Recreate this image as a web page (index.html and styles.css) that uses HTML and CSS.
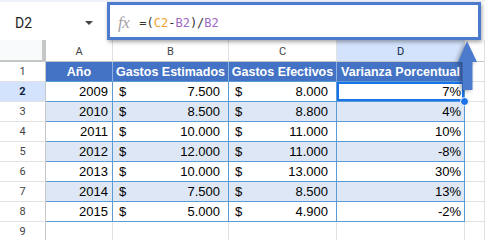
FILE: index.html
```html
<!DOCTYPE html>
<html lang="es">
<head>
    <meta charset="UTF-8">
    <meta name="viewport" content="width=device-width, initial-scale=1.0">
    <title>Varianza Porcentual</title>
    <link rel="stylesheet" href="styles.css">
</head>
<body>
    <div class="sheet">
        <div class="topstrip"></div>
        <div class="bar">
            <div class="namebox"><span>D2</span><span class="caret"></span></div>
            <div class="formula">
                <span class="fx">fx</span>
                <span class="expr">=(<span class="ref-c">C2</span>-<span class="ref-b">B2</span>)/<span class="ref-b">B2</span></span>
            </div>
        </div>
        <div class="grid">
            <div class="row colheads">
                <div class="corner"></div>
                <div class="ch">A</div>
                <div class="ch">B</div>
                <div class="ch">C</div>
                <div class="ch sel">D</div>
                <div class="ch"></div>
            </div>
            <div class="row">
                <div class="rh">1</div>
                <div class="c th">Año</div>
                <div class="c th">Gastos Estimados</div>
                <div class="c th">Gastos Efectivos</div>
                <div class="c th">Varianza Porcentual</div>
                <div class="c blank"></div>
            </div>
            <div class="row">
                <div class="rh sel">2</div>
                <div class="c num">2009</div>
                <div class="c money"><span>$</span><span>7.500</span></div>
                <div class="c money"><span>$</span><span>8.000</span></div>
                <div class="c pct active">7%<span class="handle"></span></div>
                <div class="c blank"></div>
            </div>
            <div class="row alt">
                <div class="rh">3</div>
                <div class="c num">2010</div>
                <div class="c money"><span>$</span><span>8.500</span></div>
                <div class="c money"><span>$</span><span>8.800</span></div>
                <div class="c pct">4%</div>
                <div class="c blank"></div>
            </div>
            <div class="row">
                <div class="rh">4</div>
                <div class="c num">2011</div>
                <div class="c money"><span>$</span><span>10.000</span></div>
                <div class="c money"><span>$</span><span>11.000</span></div>
                <div class="c pct">10%</div>
                <div class="c blank"></div>
            </div>
            <div class="row alt">
                <div class="rh">5</div>
                <div class="c num">2012</div>
                <div class="c money"><span>$</span><span>12.000</span></div>
                <div class="c money"><span>$</span><span>11.000</span></div>
                <div class="c pct">-8%</div>
                <div class="c blank"></div>
            </div>
            <div class="row">
                <div class="rh">6</div>
                <div class="c num">2013</div>
                <div class="c money"><span>$</span><span>10.000</span></div>
                <div class="c money"><span>$</span><span>13.000</span></div>
                <div class="c pct">30%</div>
                <div class="c blank"></div>
            </div>
            <div class="row alt">
                <div class="rh">7</div>
                <div class="c num">2014</div>
                <div class="c money"><span>$</span><span>7.500</span></div>
                <div class="c money"><span>$</span><span>8.500</span></div>
                <div class="c pct">13%</div>
                <div class="c blank"></div>
            </div>
            <div class="row">
                <div class="rh">8</div>
                <div class="c num">2015</div>
                <div class="c money"><span>$</span><span>5.000</span></div>
                <div class="c money"><span>$</span><span>4.900</span></div>
                <div class="c pct">-2%</div>
                <div class="c blank"></div>
            </div>
            <div class="row empty">
                <div class="rh">9</div>
                <div class="c blank"></div>
                <div class="c blank"></div>
                <div class="c blank"></div>
                <div class="c blank"></div>
                <div class="c blank"></div>
            </div>
        </div>
        <svg class="arrow" width="485" height="240" viewBox="0 0 485 240">
            <polygon points="467,41 477,62 472.5,62 472.5,90 462.5,90 462.5,62 458,62" fill="#4c7bce"/>
        </svg>
    </div>
</body>
</html>
```

FILE: styles.css
```css
* {
    box-sizing: border-box;
}
body {
    margin: 0;
    background: #fff;
}
.sheet {
    position: relative;
    width: 485px;
    height: 240px;
    overflow: hidden;
    font-family: "Liberation Sans", Arial, sans-serif;
}
.topstrip {
    height: 2px;
    background: #eef2f8;
}
.bar {
    display: flex;
    height: 38px;
}
.namebox {
    width: 107px;
    display: flex;
    align-items: center;
    justify-content: space-between;
    padding: 3px 14px 0 15px;
    font-family: Roboto, "Liberation Sans", sans-serif;
    font-size: 14px;
    color: #1f1f1f;
}
.caret {
    width: 0;
    height: 0;
    border-left: 4px solid transparent;
    border-right: 4px solid transparent;
    border-top: 4px solid #444;
}
.formula {
    flex: 1;
    margin-right: 4px;
    border: 3px solid #4c7bce;
    box-shadow: 1px 2px 4px rgba(0, 0, 0, 0.35);
    display: flex;
    align-items: center;
    padding: 3px 0 0 8px;
    background: #fff;
    position: relative;
    z-index: 2;
}
.fx {
    font-family: "Liberation Serif", serif;
    font-style: italic;
    font-size: 17px;
    color: #a3a3a3;
    margin-right: 10px;
    letter-spacing: -0.5px;
}
.expr {
    font-family: "DejaVu Sans Mono", monospace;
    font-size: 12px;
    color: #333;
}
.ref-c {
    color: #f29f2f;
}
.ref-b {
    color: #9d69c6;
}
.row {
    display: grid;
    grid-template-columns: 46px 67px 116px 108px 128px 1fr;
    height: 20px;
}
.colheads {
    height: 22px;
}
.corner {
    background: #f8f9fa;
    border-right: 4px solid #c4c7c5;
    border-bottom: 2px solid #c4c7c5;
}
.ch {
    display: flex;
    align-items: center;
    justify-content: center;
    font-family: Roboto, "Liberation Sans", sans-serif;
    font-size: 11px;
    color: #444;
    border-right: 1px solid #e1e1e1;
    border-bottom: 1px solid #c4c7c5;
    padding-top: 1px;
}
.ch.sel {
    background: #d3e3fd;
    color: #0b1f45;
}
.rh {
    display: flex;
    align-items: center;
    justify-content: center;
    font-family: Roboto, "Liberation Sans", sans-serif;
    font-size: 11px;
    color: #444;
    border-right: 1px solid #c4c7c5;
    border-bottom: 1px solid #e1e1e1;
}
.rh.sel {
    background: #d3e3fd;
    color: #0b1f45;
    font-weight: bold;
}
.c {
    display: flex;
    align-items: center;
    font-size: 13px;
    color: #000;
    border-right: 1px solid #5b9bd5;
    border-bottom: 1px solid #5b9bd5;
    position: relative;
}
.alt .c {
    background: #dde7f5;
}
.c.blank,
.alt .c.blank {
    background: #fff;
    border-right: 1px solid #e1e1e1;
    border-bottom: 1px solid #e1e1e1;
}
.th {
    background: #4472c4;
    color: #fff;
    font-weight: bold;
    font-size: 12.5px;
    justify-content: center;
    border-right-color: #8eb1e3;
}
.num {
    justify-content: flex-end;
    padding-right: 4px;
}
.money {
    justify-content: space-between;
    padding: 0 8px 0 6px;
}
.pct {
    justify-content: flex-end;
    padding-right: 3px;
}
.active {
    box-shadow: inset 0 0 0 2px #1a73e8;
}
.handle {
    position: absolute;
    right: -5px;
    bottom: -5px;
    width: 9px;
    height: 9px;
    border-radius: 50%;
    background: #1a73e8;
    border: 1px solid #fff;
    z-index: 3;
}
.arrow {
    position: absolute;
    left: 0;
    top: 0;
    z-index: 4;
    filter: drop-shadow(-2px 1px 2px rgba(0, 0, 0, 0.35));
}
```
